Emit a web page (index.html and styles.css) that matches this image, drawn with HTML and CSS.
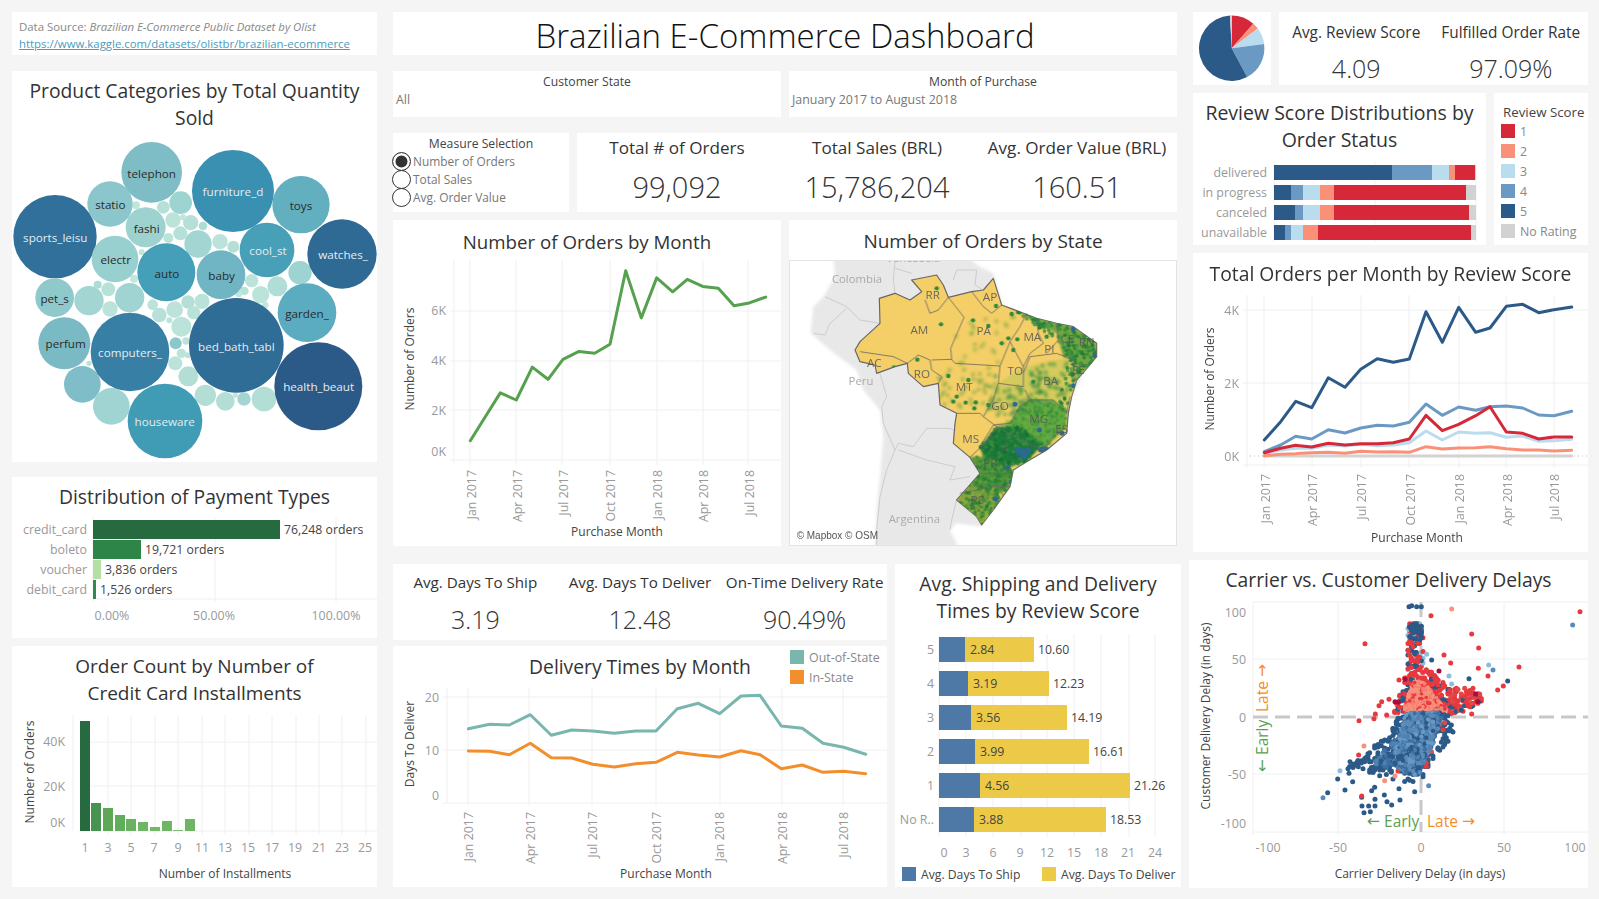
FILE: index.html
```html
<!DOCTYPE html>
<html lang="en">
<head>
<meta charset="utf-8">
<title>Brazilian E-Commerce Dashboard</title>
<link rel="stylesheet" href="styles.css">
</head>
<body>
<div class="dash">

<div class="col-left">
  <section class="panel source">
    <p>Data Source: <em>Brazilian E-Commerce Public Dataset by Olist</em></p>
    <p><a href="#">https://www.kaggle.com/datasets/olistbr/brazilian-ecommerce</a></p>
  </section>

  <section class="panel bubbles">
    <h2 class="ptitle h67">Product Categories by Total Quantity<br>Sold</h2>
    <svg class="chart" width="365" height="324" viewBox="12 138 365 324">
      <g transform="scale(.33333)">
        <g>
          <circle cx="247" cy="1153" r="55" fill="#7fbec8"/><circle cx="334" cy="1219" r="55" fill="#a0d4d2"/><circle cx="267" cy="902" r="44" fill="#a3d5d2"/><circle cx="389" cy="893" r="44" fill="#a0d4d2"/><circle cx="325" cy="868" r="21" fill="#b8e2d8"/><circle cx="330" cy="927" r="23" fill="#bce3da"/><circle cx="293" cy="854" r="12" fill="#aedcd4"/>
          <circle cx="542" cy="608" r="34" fill="#9dd4d2"/><circle cx="490" cy="622" r="19" fill="#b7e1d8"/><circle cx="408" cy="616" r="12" fill="#c0e6dc"/><circle cx="519" cy="660" r="23" fill="#bbe3da"/><circle cx="572" cy="668" r="23" fill="#b6e0d7"/><circle cx="609" cy="678" r="13" fill="#aedcd4"/><circle cx="549" cy="652" r="9" fill="#c0e6dc"/><circle cx="541" cy="700" r="21" fill="#b7e1d8"/><circle cx="505" cy="714" r="15" fill="#bce3da"/><circle cx="594" cy="732" r="41" fill="#a3d5d2"/><circle cx="660" cy="725" r="23" fill="#bce3da"/><circle cx="700" cy="740" r="18" fill="#b3dfd6"/><circle cx="425" cy="757" r="9" fill="#c0e6dc"/><circle cx="402" cy="836" r="12" fill="#c3e7dd"/><circle cx="900" cy="818" r="35" fill="#9dd3d1"/><circle cx="832" cy="859" r="30" fill="#b0ddd5"/><circle cx="755" cy="842" r="20" fill="#bce3da"/><circle cx="733" cy="873" r="13" fill="#b8e2d8"/><circle cx="782" cy="884" r="26" fill="#bce3da"/><circle cx="716" cy="882" r="10" fill="#c3e7dd"/><circle cx="796" cy="915" r="10" fill="#c3e7dd"/>
          <circle cx="458" cy="914" r="16" fill="#bce3da"/><circle cx="524" cy="929" r="25" fill="#bce3da"/><circle cx="478" cy="945" r="22" fill="#b7e1d8"/><circle cx="564" cy="906" r="20" fill="#b3dfd6"/><circle cx="606" cy="904" r="23" fill="#b9e2d9"/><circle cx="581" cy="938" r="20" fill="#b9e2d9"/><circle cx="508" cy="961" r="9" fill="#bce3da"/><circle cx="544" cy="980" r="30" fill="#bce3da"/><circle cx="527" cy="1030" r="18" fill="#8bc7cb"/><circle cx="558" cy="1023" r="11" fill="#bce3da"/><circle cx="544" cy="1060" r="14" fill="#bce3da"/><circle cx="526" cy="1090" r="21" fill="#bce3da"/><circle cx="565" cy="1129" r="30" fill="#b2ded6"/><circle cx="616" cy="1186" r="32" fill="#b2ded6"/><circle cx="676" cy="1204" r="28" fill="#b2ded6"/><circle cx="732" cy="1197" r="20" fill="#a3d5d2"/><circle cx="792" cy="1197" r="37" fill="#b2ded6"/><circle cx="706" cy="1186" r="8" fill="#c3e7dd"/><circle cx="267" cy="1090" r="8" fill="#bce3da"/><circle cx="563" cy="1066" r="9" fill="#bce3da"/>
        </g>
        <g>
          <circle cx="455" cy="517" r="91" fill="#7fbdc6"/><circle cx="699" cy="573" r="123" fill="#3a90b0"/><circle cx="903" cy="614" r="86" fill="#62afc0"/><circle cx="165" cy="710" r="125" fill="#30709a"/><circle cx="330" cy="612" r="68" fill="#8ac6cb"/><circle cx="437" cy="682" r="60" fill="#9dd2d1"/><circle cx="345" cy="777" r="70" fill="#98cfcf"/><circle cx="499" cy="817" r="87" fill="#459fb8"/><circle cx="663" cy="824" r="73" fill="#6fb5c4"/><circle cx="801" cy="750" r="82" fill="#489fb8"/><circle cx="1026" cy="762" r="104" fill="#2f6a94"/><circle cx="921" cy="938" r="88" fill="#5bacc0"/><circle cx="164" cy="893" r="58" fill="#8fc9cc"/><circle cx="193" cy="1030" r="78" fill="#79bac5"/><circle cx="390" cy="1056" r="118" fill="#377fa4"/><circle cx="709" cy="1036" r="142" fill="#2f6c96"/><circle cx="955" cy="1159" r="132" fill="#2c5a88"/><circle cx="495" cy="1263" r="112" fill="#409bb5"/>
        </g>
        <g class="btext">
          <text x="455" y="522">telephon</text><text x="331" y="616">statio</text><text x="440" y="687">fashi</text><text x="347" y="781">electr</text><text x="501" y="823">auto</text><text x="665" y="829">baby</text><text x="903" y="619">toys</text><text x="921" y="943">garden_</text><text x="164" y="898">pet_s</text><text x="197" y="1033">perfum</text>
        </g>
        <g class="btext light">
          <text x="699" y="577">furniture_d</text><text x="166" y="715">sports_leisu</text><text x="804" y="754">cool_st</text><text x="1029" y="766">watches_</text><text x="390" y="1060">computers_</text><text x="709" y="1041">bed_bath_tabl</text><text x="956" y="1161">health_beaut</text><text x="494" y="1267">houseware</text>
        </g>
      </g>
    </svg>
  </section>

  <section class="panel payment">
    <h2 class="ptitle h40">Distribution of Payment Types</h2>
    <svg class="chart" width="365" height="121" viewBox="12 517 365 121">
      <path class="grid" d="M93 517V602M215 517V602M336 517V602M93 599H377"/>
      <rect x="93" y="520" width="187" height="19" fill="#276a3f"/>
      <rect x="93" y="540" width="48" height="19" fill="#2e8548"/>
      <rect x="93" y="560" width="8" height="19" fill="#b5e0a5"/>
      <rect x="93" y="580" width="3" height="19" fill="#2f8a4d"/>
      <g class="tick end"><text x="87" y="530">credit_card</text><text x="87" y="550">boleto</text><text x="87" y="570">voucher</text><text x="87" y="590">debit_card</text></g>
      <g class="val"><text x="284" y="530">76,248 orders</text><text x="145" y="550">19,721 orders</text><text x="105" y="570">3,836 orders</text><text x="100" y="590">1,526 orders</text></g>
      <g class="tick mid"><text x="112" y="616">0.00%</text><text x="214" y="616">50.00%</text><text x="336" y="616">100.00%</text></g>
    </svg>
  </section>

  <section class="panel installments">
    <h2 class="ptitle h68 np t19">Order Count by Number of<br>Credit Card Installments</h2>
    <svg class="chart" width="365" height="173" viewBox="12 714 365 173">
      <path class="grid" d="M73 715V831M108 715V835M131 715V835M155 715V835M178 715V835M202 715V835M225 715V835M249 715V835M272 715V835M296 715V835M319 715V835M342 715V835M366 715V835M80 742H377M80 786H377M80 831H377"/>
      <rect x="80" y="721" width="10" height="110" fill="#276a3f"/><rect x="91" y="803" width="10" height="28" fill="#489350"/><rect x="103" y="808" width="10" height="23" fill="#5ea755"/><rect x="115" y="815" width="10" height="16" fill="#62ac5d"/><rect x="126" y="819" width="10" height="12" fill="#6ab162"/><rect x="138" y="822" width="10" height="9" fill="#6eb564"/><rect x="150" y="827" width="10" height="4" fill="#72b866"/><rect x="162" y="821" width="10" height="10" fill="#6eb564"/><rect x="173" y="830" width="10" height="1" fill="#7dbe6e"/><rect x="185" y="819" width="10" height="12" fill="#6eb564"/>
      <g class="tick end"><text x="65" y="742">40K</text><text x="65" y="787">20K</text><text x="65" y="823">0K</text></g>
      <g class="tick mid"><text x="85" y="848">1</text><text x="108" y="848">3</text><text x="131" y="848">5</text><text x="154" y="848">7</text><text x="178" y="848">9</text><text x="202" y="848">11</text><text x="225" y="848">13</text><text x="248" y="848">15</text><text x="272" y="848">17</text><text x="295" y="848">19</text><text x="319" y="848">21</text><text x="342" y="848">23</text><text x="365" y="848">25</text></g>
      <text class="axt" x="225" y="873">Number of Installments</text>
      <text class="axt" transform="translate(29 772) rotate(-90)">Number of Orders</text>
    </svg>
  </section>
</div>

<div class="main">
  <div class="upper">
    <div class="mid-top">
      <h1 class="panel dash-title">Brazilian E-Commerce Dashboard</h1>
      <div class="filters">
        <div class="panel filter"><div class="flabel">Customer State</div><div class="fvalue">All</div></div>
        <div class="panel filter"><div class="flabel">Month of Purchase</div><div class="fvalue">January 2017 to August 2018</div></div>
      </div>
      <div class="measure-row">
        <div class="panel measure">
          <div class="flabel">Measure Selection</div>
          <div class="radio"><span class="dot on"></span>Number of Orders</div>
          <div class="radio"><span class="dot"></span>Total Sales</div>
          <div class="radio"><span class="dot"></span>Avg. Order Value</div>
        </div>
        <div class="panel kpis k1">
          <div class="kpi"><div class="klabel">Total # of Orders</div><div class="kvalue">99,092</div></div>
          <div class="kpi"><div class="klabel">Total Sales (BRL)</div><div class="kvalue">15,786,204</div></div>
          <div class="kpi"><div class="klabel">Avg. Order Value (BRL)</div><div class="kvalue">160.51</div></div>
        </div>
      </div>
      <div class="charts-row">
        <section class="panel">
          <h2 class="ptitle h40 np pt2 t187">Number of Orders by Month</h2>
          <svg class="chart" width="388" height="286" viewBox="393 260 388 286">
            <path class="grid" d="M454 260V463M470 260V465M516 260V465M562 260V465M610 260V465M657 260V465M703 260V465M748 260V465M450 311H781M450 361H781M450 410H781M450 460H781"/>
            <polyline class="line" stroke="#56a14f" points="470.3,440.7 485.3,416.8 500.3,392.9 516.3,400 532.3,367.1 548,379.3 563,359.3 579,351.4 594.7,353.2 610,344.3 625.7,270.7 641.3,317.9 656.7,277.9 672.7,291.8 687.3,279.3 702.7,286.4 718.3,288.2 734,305.7 749.3,302.9 765.7,297.1"/>
            <g class="tick end"><text x="446" y="311">6K</text><text x="446" y="361">4K</text><text x="446" y="411">2K</text><text x="446" y="452">0K</text></g>
            <g class="tick rot"><text transform="translate(471 470) rotate(-90)">Jan 2017</text><text transform="translate(517 470) rotate(-90)">Apr 2017</text><text transform="translate(563 470) rotate(-90)">Jul 2017</text><text transform="translate(610 470) rotate(-90)">Oct 2017</text><text transform="translate(657 470) rotate(-90)">Jan 2018</text><text transform="translate(703 470) rotate(-90)">Apr 2018</text><text transform="translate(749 470) rotate(-90)">Jul 2018</text></g>
            <text class="axt" x="617" y="531">Purchase Month</text>
            <text class="axt" transform="translate(409 359) rotate(-90)">Number of Orders</text>
          </svg>
        </section>
        <section class="panel">
          <h2 class="ptitle h40 np pt2 t19">Number of Orders by State</h2>
          <svg class="chart" width="388" height="286" viewBox="789 260 388 286">
            <defs>
              <clipPath id="brazil"><polygon points="225,420 240,395 300,340 298,265 345,250 390,270 425,245 395,210 470,195 490,225 505,262 575,245 610,240 640,205 665,285 700,298 770,325 830,340 880,350 950,400 950,440 925,470 890,510 875,560 865,610 860,670 800,720 740,755 700,780 690,830 640,900 605,945 590,920 530,870 600,790 570,742 520,700 525,640 530,610 480,585 475,520 430,530 385,490 382,460 345,470 290,490 285,465 240,455"/></clipPath>
              <filter id="soft"><feGaussianBlur stdDeviation="2.4"/></filter>
              <filter id="softer"><feGaussianBlur stdDeviation="5"/></filter>
            </defs>
            <g transform="translate(780 210) scale(.33333)">
              <polygon class="land" filter="url(#softer)" points="160,140 165,200 130,260 100,290 92,370 150,420 230,480 250,540 300,600 310,680 300,800 290,900 285,1010 535,1010 510,960 530,940 605,950 640,860 760,700 860,600 950,400 700,300 670,290 640,190 600,170 560,140"/>
              <path class="border" d="M135 260L200 290 240 330 300 340M100 370L135 375 150 340 200 295M345 150L340 210 345 250M395 190L345 175M520 210L530 180 590 180 585 225 610 240M300 490L320 560 305 590 310 640 345 720 355 700 400 710 440 655 510 655 520 660M345 720L320 780 300 860 290 960 290 1005M355 720L440 750 525 770 510 810 570 800M530 870L515 930 510 960"/>
              <polygon class="state" points="225,420 240,395 300,340 298,265 345,250 390,270 425,245 395,210 470,195 490,225 505,262 575,245 610,240 640,205 665,285 700,298 770,325 830,340 880,350 950,400 950,440 925,470 890,510 875,560 865,610 860,670 800,720 740,755 700,780 690,830 640,900 605,945 590,920 530,870 600,790 570,742 520,700 525,640 530,610 480,585 475,520 430,530 385,490 382,460 345,470 290,490 285,465 240,455"/>
              <g clip-path="url(#brazil)">
                <g filter="url(#soft)">
                  <polygon fill="#c8c858" opacity=".7" points="730,470 880,440 890,510 860,610 750,570 640,580 610,620 640,530"/>
                  <polygon fill="#68ab3f" points="640,645 690,640 720,590 750,565 820,570 860,600 860,650 820,690 790,720 720,650"/>
                  <polygon fill="#1f7c3a" points="600,710 650,650 720,650 790,700 740,755 690,770 610,740"/>
                  <polygon fill="#4f933a" points="570,742 610,740 690,770 700,790 690,830 660,850 610,860 550,850 600,790"/>
                  <polygon fill="#8ea63c" points="530,870 570,825 640,830 660,860 640,900 605,945 590,920"/>
                  <polygon fill="#71a53f" points="700,300 770,325 880,350 950,400 950,440 890,510 880,450 850,440 830,370 770,340"/>
                </g>
                <g id="mapsoft" filter="url(#soft)"></g>
                <g id="mapdots"></g>
              </g>
              <path class="sline" d="M505 262L552 322 512 415 515 448 525 460 660 468M435 270L450 310 475 300 505 262M575 245L610 290 635 310 665 285M740 310L720 350 690 395 660 468 655 520 640 570 610 620M240 425L340 440 382 460 415 435 450 450 455 480 485 500 475 520M455 450L515 448M530 610L600 610 610 620 650 650 620 695 570 742M690 395L730 470 730 530 655 520M770 325L775 370 790 400 750 430 730 470M830 340L835 390 800 430M730 490L750 440 830 430 880 450 885 510M870 560L860 610 820 570 750 570 735 540M640 645L690 640 720 590 750 570M640 645L600 710M860 650L820 680 790 720 740 700 650 650M600 790L690 790M540 850L640 830 690 830"/>
              <g class="stlabel"><text x="418" y="360">AM</text><text x="458" y="255">RR</text><text x="630" y="260">AP</text><text x="611" y="362">PA</text><text x="757" y="380">MA</text><text x="862" y="387">CE</text><text x="920" y="395">RN</text><text x="808" y="415">PI</text><text x="283" y="458">AC</text><text x="426" y="492">RO</text><text x="553" y="530">MT</text><text x="706" y="482">TO</text><text x="812" y="513">BA</text><text x="895" y="480">SE</text><text x="660" y="587">GO</text><text x="776" y="627">MG</text><text x="845" y="657">ES</text><text x="572" y="687">MS</text><text x="685" y="703">SP</text><text x="631" y="758">PR</text><text x="592" y="868">RS</text></g>
              <g class="cntlabel"><text x="231" y="207">Colombia</text><text x="243" y="513">Peru</text><text x="403" y="925">Argentina</text><text x="400" y="143">Venezuela</text></g>
              <rect x="40" y="960" width="243" height="35" fill="#fff" opacity=".75"/>
              <text class="copy" x="50" y="978">© Mapbox © OSM</text>
            </g>
            <rect class="frame" x="789.5" y="260.5" width="387" height="285"/>
          </svg>
        </section>
      </div>
    </div>

    <div class="right-top">
      <div class="pie-row">
        <div class="panel pie">
          <svg width="78" height="73" viewBox="1193 12 78 73">
            <path fill="#d62839" d="M1231.7 48.3V15.6A32.7 32.7 0 0 1 1253.3 23.8Z"/>
            <path fill="#fb9078" d="M1231.7 48.3L1253.3 23.8A32.7 32.7 0 0 1 1257.8 28.6Z"/>
            <path fill="#b9dcee" d="M1231.7 48.3L1257.8 28.6A32.7 32.7 0 0 1 1264.1 44Z"/>
            <path fill="#6a9ac4" d="M1231.7 48.3L1264.1 44A32.7 32.7 0 0 1 1247.1 77.1Z"/>
            <path fill="#2c5a88" d="M1231.7 48.3L1247.1 77.1A32.7 32.7 0 1 1 1230 15.6Z"/>
            <path fill="#d2d2d2" d="M1231.7 48.3L1230 15.6H1231.7Z"/>
          </svg>
        </div>
        <div class="panel kpis k3">
          <div class="kpi"><div class="klabel">Avg. Review Score</div><div class="kvalue">4.09</div></div>
          <div class="kpi"><div class="klabel">Fulfilled Order Rate</div><div class="kvalue">97.09%</div></div>
        </div>
      </div>
      <div class="review-row">
        <section class="panel">
          <h2 class="ptitle h68 t195">Review Score Distributions by<br>Order Status</h2>
          <svg class="chart" width="293" height="84" viewBox="1193 161 293 84">
            <path class="grid" d="M1375 161V242M1476 161V242M1274 161V242"/>
            <g class="stack">
              <rect x="1274" y="165" width="118" height="15" fill="#2c5a88"/><rect x="1392" y="165" width="40" height="15" fill="#6a9ac4"/><rect x="1432" y="165" width="17" height="15" fill="#b9dcee"/><rect x="1449" y="165" width="6" height="15" fill="#fb9078"/><rect x="1455" y="165" width="20" height="15" fill="#d62839"/><rect x="1475" y="165" width="1" height="15" fill="#d2d2d2"/>
              <rect x="1274" y="185" width="17" height="15" fill="#2c5a88"/><rect x="1291" y="185" width="12" height="15" fill="#6a9ac4"/><rect x="1303" y="185" width="17" height="15" fill="#b9dcee"/><rect x="1320" y="185" width="14" height="15" fill="#fb9078"/><rect x="1334" y="185" width="132" height="15" fill="#d62839"/><rect x="1466" y="185" width="10" height="15" fill="#d2d2d2"/>
              <rect x="1274" y="205" width="21" height="15" fill="#2c5a88"/><rect x="1295" y="205" width="8" height="15" fill="#6a9ac4"/><rect x="1303" y="205" width="17" height="15" fill="#b9dcee"/><rect x="1320" y="205" width="14" height="15" fill="#fb9078"/><rect x="1334" y="205" width="135" height="15" fill="#d62839"/><rect x="1469" y="205" width="7" height="15" fill="#d2d2d2"/>
              <rect x="1274" y="225" width="11" height="15" fill="#2c5a88"/><rect x="1285" y="225" width="6" height="15" fill="#6a9ac4"/><rect x="1291" y="225" width="12" height="15" fill="#b9dcee"/><rect x="1303" y="225" width="15" height="15" fill="#fb9078"/><rect x="1318" y="225" width="153" height="15" fill="#d62839"/><rect x="1471" y="225" width="5" height="15" fill="#d2d2d2"/>
            </g>
            <g class="tick end"><text x="1267" y="173">delivered</text><text x="1267" y="193">in progress</text><text x="1267" y="213">canceled</text><text x="1267" y="233">unavailable</text></g>
          </svg>
        </section>
        <div class="panel legend">
          <div class="ltitle">Review Score</div>
          <div class="litem"><span class="sw c1"></span>1</div>
          <div class="litem"><span class="sw c2"></span>2</div>
          <div class="litem"><span class="sw c3"></span>3</div>
          <div class="litem"><span class="sw c4"></span>4</div>
          <div class="litem"><span class="sw c5"></span>5</div>
          <div class="litem"><span class="sw c6"></span>No Rating</div>
        </div>
      </div>
      <section class="panel total-orders">
        <h2 class="ptitle h38 np pt2">Total Orders per Month by Review Score</h2>
        <svg class="chart" width="395" height="261" viewBox="1193 291 395 261">
          <path class="grid" d="M1247 295V468M1264 295V468M1312 295V468M1361 295V468M1409 295V468M1459 295V468M1506 295V468M1554 295V468M1243 310H1588M1243 383H1588M1243 465H1588"/>
          <path class="dots0" d="M1250 456H1588"/>
          <polyline class="line" stroke="#d2d2d2" points="1264.3,456 1571.7,456"/>
          <polyline class="line" stroke="#b9dcee" points="1264.3,453.3 1280.7,450 1295.7,448.3 1311.7,448.3 1328.3,445 1345,446 1360.7,444.3 1377.3,445.7 1393.3,445 1409.3,442.7 1426,431 1442.3,440 1458.7,432 1475.7,433.3 1490,432.7 1506.3,437.3 1522.7,436 1538.7,441.3 1554,440.7 1571.7,439.3"/>
          <polyline class="line" stroke="#6a9ac4" points="1264.3,451.7 1280.7,445 1295.7,436.3 1311.7,439 1328.3,429.7 1345,433 1360.7,428 1377.3,425.3 1393.3,426 1409.3,422.3 1426,404 1442.3,415.3 1458.7,407 1475.7,410.3 1490,406.7 1506.3,406 1522.7,408 1538.7,415 1554,415.7 1571.7,411.3"/>
          <polyline class="line" stroke="#fb9078" points="1264.3,455.7 1280.7,454.3 1295.7,453.7 1311.7,452.7 1328.3,452.3 1345,453.3 1360.7,451.3 1377.3,452 1393.3,451.7 1409.3,452.3 1426,446.7 1442.3,449 1458.7,448 1475.7,447.7 1490,446.7 1506.3,448.7 1522.7,450 1538.7,450 1554,451 1571.7,450.3"/>
          <polyline class="line" stroke="#d62839" points="1264.3,452.7 1280.7,448.3 1295.7,445.3 1311.7,447 1328.3,443.3 1345,445 1360.7,443.7 1377.3,443.7 1393.3,442.7 1409.3,439 1426,415.3 1442.3,430.7 1458.7,424.3 1475.7,415.7 1490,406.7 1506.3,432 1522.7,433.3 1538.7,439 1554,437 1571.7,437"/>
          <polyline class="line" stroke="#2c5a88" points="1264.3,440 1280.7,421.7 1295.7,401.3 1311.7,407.7 1328.3,377.7 1345,387.3 1360.7,369.3 1377.3,358.7 1393.3,362.3 1409.3,359 1426,311.7 1442.3,342.3 1458.7,307.3 1475.7,332.3 1490,328 1506.3,306.3 1522.7,304.3 1538.7,312.7 1554,309.7 1571.7,307"/>
          <g class="tick end"><text x="1239" y="311">4K</text><text x="1239" y="384">2K</text><text x="1239" y="457">0K</text></g>
          <g class="tick rot"><text transform="translate(1265 474) rotate(-90)">Jan 2017</text><text transform="translate(1312 474) rotate(-90)">Apr 2017</text><text transform="translate(1361 474) rotate(-90)">Jul 2017</text><text transform="translate(1410 474) rotate(-90)">Oct 2017</text><text transform="translate(1459 474) rotate(-90)">Jan 2018</text><text transform="translate(1507 474) rotate(-90)">Apr 2018</text><text transform="translate(1554 474) rotate(-90)">Jul 2018</text></g>
          <text class="axt" x="1417" y="537">Purchase Month</text>
          <text class="axt" transform="translate(1209 379) rotate(-90)">Number of Orders</text>
        </svg>
      </section>
    </div>
  </div>

  <div class="lower">
    <div class="mid-low">
      <div class="delivery-col">
        <div class="panel kpis k2">
          <div class="kpi"><div class="klabel">Avg. Days To Ship</div><div class="kvalue">3.19</div></div>
          <div class="kpi"><div class="klabel">Avg. Days To Deliver</div><div class="kvalue">12.48</div></div>
          <div class="kpi"><div class="klabel">On-Time Delivery Rate</div><div class="kvalue">90.49%</div></div>
        </div>
        <section class="panel delivery">
          <h2 class="ptitle h42">Delivery Times by Month</h2>
          <div class="dlegend">
            <div class="litem"><span class="sw teal"></span>Out-of-State</div>
            <div class="litem"><span class="sw orange"></span>In-State</div>
          </div>
          <svg class="chart" width="494" height="199" viewBox="393 688 494 199">
            <path class="grid" d="M447 688V803M468 688V806M529 688V806M592 688V806M656 688V806M720 688V806M782 688V806M843 688V806M443 697H887M443 750H887M443 803H887"/>
            <polyline class="line" stroke="#79b6ae" points="468.3,728.7 489.7,724.3 509.3,725 530.3,714.7 551.3,735.3 571.7,730 592.7,731 614.3,733.3 635.7,731 656,731 677.3,708.7 698.3,703.3 719.7,713.7 741,696 760,695.3 781.3,726 802.3,728.3 823,743.3 843.7,747.3 865.7,754.3"/>
            <polyline class="line" stroke="#f28e2b" points="468.3,751 489.7,751.3 509.3,754.7 530.3,743.3 551.3,757.7 571.7,758 592.7,764.3 614.3,767 635.7,763.7 656,762.3 677.3,752.3 698.3,755 719.7,757 741,750.7 760,754.7 781.3,768.7 802.3,765 823,772.3 843.7,771.3 865.7,773.7"/>
            <g class="tick end"><text x="439" y="698">20</text><text x="439" y="751">10</text><text x="439" y="796">0</text></g>
            <g class="tick rot"><text transform="translate(468 812) rotate(-90)">Jan 2017</text><text transform="translate(530 812) rotate(-90)">Apr 2017</text><text transform="translate(592 812) rotate(-90)">Jul 2017</text><text transform="translate(656 812) rotate(-90)">Oct 2017</text><text transform="translate(719 812) rotate(-90)">Jan 2018</text><text transform="translate(782 812) rotate(-90)">Apr 2018</text><text transform="translate(843 812) rotate(-90)">Jul 2018</text></g>
            <text class="axt" x="666" y="873">Purchase Month</text>
            <text class="axt" transform="translate(409 744) rotate(-90)">Days To Deliver</text>
          </svg>
        </section>
      </div>
      <section class="panel shipping">
        <h2 class="ptitle h67">Avg. Shipping and Delivery<br>Times by Review Score</h2>
        <svg class="chart" width="286" height="256" viewBox="895 631 286 256">
          <path class="grid" d="M939 634V837M966 634V837M993 634V837M1021 634V837M1047 634V837M1074 634V837M1101 634V837M1129 634V837M1155 634V837"/>
          <g fill="#edc948"><rect x="939" y="637" width="95" height="25"/><rect x="939" y="671" width="110" height="25"/><rect x="939" y="705" width="128" height="25"/><rect x="939" y="739" width="150" height="25"/><rect x="939" y="773" width="191" height="25"/><rect x="939" y="807" width="167" height="25"/></g>
          <g fill="#4e79a7"><rect x="939" y="637" width="26" height="25"/><rect x="939" y="671" width="29" height="25"/><rect x="939" y="705" width="32" height="25"/><rect x="939" y="739" width="36" height="25"/><rect x="939" y="773" width="41" height="25"/><rect x="939" y="807" width="35" height="25"/></g>
          <g class="tick end"><text x="934" y="650">5</text><text x="934" y="684">4</text><text x="934" y="718">3</text><text x="934" y="752">2</text><text x="934" y="786">1</text><text x="934" y="820">No R..</text></g>
          <g class="val"><text x="970" y="650">2.84</text><text x="973" y="684">3.19</text><text x="976" y="718">3.56</text><text x="980" y="752">3.99</text><text x="985" y="786">4.56</text><text x="979" y="820">3.88</text>
          <text x="1038" y="650">10.60</text><text x="1053" y="684">12.23</text><text x="1071" y="718">14.19</text><text x="1093" y="752">16.61</text><text x="1134" y="786">21.26</text><text x="1110" y="820">18.53</text></g>
          <g class="tick mid"><text x="944" y="853">0</text><text x="966" y="853">3</text><text x="993" y="853">6</text><text x="1020" y="853">9</text><text x="1047" y="853">12</text><text x="1074" y="853">15</text><text x="1101" y="853">18</text><text x="1128" y="853">21</text><text x="1155" y="853">24</text></g>
          <rect x="902" y="867" width="14" height="14" fill="#4e79a7"/><rect x="1042" y="867" width="14" height="14" fill="#edc948"/>
          <g class="legtext"><text x="921" y="874">Avg. Days To Ship</text><text x="1061" y="874">Avg. Days To Deliver</text></g>
        </svg>
      </section>
    </div>
    <section class="panel carrier">
      <h2 class="ptitle h40">Carrier vs. Customer Delivery Delays</h2>
      <svg class="chart" width="399" height="288" viewBox="1189 600 399 288">
        <path class="grid" d="M1253 602V835M1338 602V835M1504 602V835M1253 602H1588M1253 659H1588M1253 774H1588M1253 832H1588"/>
        <path class="dash-line" d="M1253 717H1588M1421 602V832"/>
        <g id="scatter" transform="translate(1185 560) scale(.33333)"></g>
        <g class="tick end"><text x="1246" y="613">100</text><text x="1246" y="660">50</text><text x="1246" y="718">0</text><text x="1246" y="775">-50</text><text x="1246" y="824">-100</text></g>
        <g class="tick mid"><text x="1268" y="848">-100</text><text x="1338" y="848">-50</text><text x="1421" y="848">0</text><text x="1504" y="848">50</text><text x="1575" y="848">100</text></g>
        <text class="axt" x="1420" y="873">Carrier Delivery Delay (in days)</text>
        <text class="axt" transform="translate(1205 716) rotate(-90)">Customer Delivery Delay (in days)</text>
        <text class="note late" x="1427" y="821">Late <tspan class="arrow">→</tspan></text>
        <text class="note early" x="1367" y="821"><tspan class="arrow">←</tspan> Early</text>
        <text class="note late" transform="translate(1262 712) rotate(-90)">Late <tspan class="arrow">→</tspan></text>
        <text class="note early" transform="translate(1262 772) rotate(-90)"><tspan class="arrow">←</tspan> Early</text>
      </svg>
    </section>
  </div>
</div>

</div>
<script src="script.js"></script>
</body>
</html>
```

FILE: styles.css
```css
* { box-sizing: border-box; }
html, body { margin: 0; padding: 0; }
body {
  width: 1599px;
  height: 899px;
  overflow: hidden;
  background: #f5f5f5;
  font-family: "Open Sans", "Noto Sans", sans-serif;
  color: #333;
}
.dash { display: flex; gap: 16px; padding: 12px 0 0 12px; }
.panel { background: #fff; position: relative; }
.chart { display: block; overflow: hidden; }

/* left column */
.col-left { width: 365px; display: flex; flex-direction: column; }
.source { height: 43px; padding: 6px 7px; font-size: 11.4px; line-height: 17px; color: #888; }
.source p { margin: 0; white-space: nowrap; }
.source a { color: #4b9bbd; }
.bubbles { height: 391px; margin-top: 16px; }
.payment { height: 161px; margin-top: 15px; }
.installments { height: 241px; margin-top: 8px; }

/* panel titles */
.ptitle {
  margin: 0;
  padding-bottom: 2px;
  display: flex;
  align-items: center;
  justify-content: center;
  text-align: center;
  font-size: 19.3px;
  font-weight: 400;
  line-height: 27px;
  color: #333;
}
.np { padding-bottom: 0; }
.pt2 { padding-top: 2px; }
.t187 { font-size: 18.7px; }
.t19 { font-size: 19px; }
.t195 { font-size: 19.5px; }
.h38 { height: 38px; }
.h40 { height: 40px; }
.h42 { height: 42px; }
.h67 { height: 67px; }
.h68 { height: 68px; }

/* layout */
.main { width: 1195px; display: flex; flex-direction: column; gap: 8px; }
.upper { display: grid; grid-template-columns: 784px 395px; gap: 16px; height: 540px; }
.mid-top { display: flex; flex-direction: column; }
.dash-title {
  margin: 0;
  height: 43px;
  font-size: 33px;
  font-weight: 300;
  line-height: 47px;
  text-align: center;
  color: #111;
}
.filters { display: grid; grid-template-columns: 388px 388px; gap: 8px; margin-top: 16px; }
.filter { height: 46px; padding-top: 2px; }
.flabel { font-size: 12.2px; line-height: 17px; text-align: center; color: #444; font-weight: 500; }
.fvalue { font-size: 12.4px; line-height: 18px; padding: 1px 3px; color: #777; }
.measure-row { display: flex; gap: 8px; margin-top: 16px; }
.measure { width: 176px; height: 79px; padding-top: 2px; }
.radio { display: flex; align-items: center; gap: 2px; height: 18px; font-size: 11.9px; color: #777; }
.dot { width: 19px; height: 19px; margin-left: -1px; border: 1px solid #333; border-radius: 50%; flex: none; background: #fff; }
.dot.on { box-shadow: inset 0 0 0 2.5px #fff, inset 0 0 0 9px #333; }
.charts-row { display: grid; grid-template-columns: 388px 388px; gap: 8px; margin-top: 8px; height: 326px; }

/* KPI blocks */
.kpis { display: grid; grid-auto-flow: column; grid-auto-columns: 1fr; text-align: center; }
.klabel { line-height: 24px; white-space: nowrap; color: #333; }
.kvalue { line-height: 36px; font-weight: 300; color: #333; }
.k1 { width: 600px; height: 79px; padding-top: 3px; }
.k1 .klabel { font-size: 17.1px; }
.k1 .kvalue { font-size: 29px; margin-top: 9px; }
.k2 { height: 76px; padding-top: 6px; }
.k2 .klabel { font-size: 15.2px; }
.k2 .kvalue { font-size: 25px; margin-top: 7px; }
.k3 { width: 309px; height: 73px; padding-top: 9px; }
.k3 .klabel { font-size: 15.4px; }
.k3 .kvalue { font-size: 25px; margin-top: 5px; }

/* right column */
.right-top { display: flex; flex-direction: column; gap: 8px; }
.pie-row { display: flex; gap: 8px; height: 73px; }
.pie { width: 78px; height: 73px; }
.pie svg { display: block; }
.review-row { display: grid; grid-template-columns: 293px 94px; gap: 8px; height: 152px; }
.legend { padding: 11px 0 0 7px; }
.ltitle { font-size: 13.3px; line-height: 17px; color: #444; margin-left: 2px; white-space: nowrap; }
.litem { display: flex; align-items: center; gap: 5px; height: 20px; font-size: 12.4px; color: #888; white-space: nowrap; }
.sw { width: 14px; height: 14px; flex: none; }
.c1 { background: #d62839; }
.c2 { background: #fb9078; }
.c3 { background: #b9dcee; }
.c4 { background: #6a9ac4; }
.c5 { background: #2c5a88; }
.c6 { background: #d2d2d2; }
.teal { background: #79b6ae; }
.orange { background: #f28e2b; }
.total-orders { height: 299px; }

/* lower band */
.lower { display: flex; gap: 8px; height: 328px; }
.mid-low { width: 788px; display: flex; gap: 8px; padding-top: 4px; }
.delivery-col { width: 494px; display: flex; flex-direction: column; gap: 6px; }
.delivery { height: 241px; }
.dlegend { position: absolute; top: 1px; left: 397px; }
.shipping { width: 286px; height: 323px; }
.carrier { width: 399px; height: 328px; }

/* svg chart parts */
.grid { stroke: #f0f0f0; stroke-width: 1; fill: none; }
.line { fill: none; stroke-width: 3; stroke-linejoin: round; stroke-linecap: round; }
.dots0 { stroke: #bbb; stroke-width: 1; stroke-dasharray: 1 3; fill: none; }
.dash-line { stroke: #c8c8c8; stroke-width: 3; stroke-dasharray: 15 7; fill: none; }
.chart text { font-family: "Open Sans", "Noto Sans", sans-serif; dominant-baseline: central; }
.tick text { font-size: 12.4px; fill: #999; }
.end, .mid, .val { transform: translateY(-1px); }
.end text { text-anchor: end; }
.mid text { text-anchor: middle; }
.rot text { text-anchor: end; }
.val text { font-size: 12.3px; fill: #444; }
.legtext text { font-size: 12.2px; fill: #444; }
.axt { font-size: 12px; fill: #444; text-anchor: middle; }
.note { font-size: 15.5px; }
.chart .arrow { font-family: "DejaVu Sans", sans-serif; }
.late { fill: #f28e2b; }
.early { fill: #59a14f; }
.btext { transform: translateY(-2.5px); }
.btext text { font-size: 35px; text-anchor: middle; fill: #2b2b2b; }
.btext.light text { fill: #e4edf2; }

/* map */
.land { fill: #e8e8e8; }
.border { fill: none; stroke: #c6c6c6; stroke-width: 2.5; }
.state { fill: #f4ce66; stroke: #666; stroke-width: 3.5; stroke-linejoin: round; }
.sline { fill: none; stroke: #666; stroke-width: 3; opacity: .8; }
.stlabel text { font-size: 35px; fill: #555; text-anchor: middle; opacity: .85; }
.cntlabel text { font-size: 34px; fill: #aaa; text-anchor: middle; }
.chart .copy { font-family: "Liberation Sans", sans-serif; font-size: 30px; fill: #555; }
.frame { fill: none; stroke: #e3e3e3; stroke-width: 1; }
```

FILE: script.js
```js
// Seeded scatter marks for the map and the delay plot: too many points to list by hand.
(function () {
  var NS = 'http://www.w3.org/2000/svg';
  var seed = 12345;
  function rnd() {
    seed = (seed * 1664525 + 1013904223) >>> 0;
    return seed / 4294967296;
  }
  function inside(p, poly) {
    var c = false;
    for (var i = 0, j = poly.length - 1; i < poly.length; j = i++) {
      if ((poly[i][1] > p[1]) !== (poly[j][1] > p[1]) &&
          p[0] < (poly[j][0] - poly[i][0]) * (p[1] - poly[i][1]) / (poly[j][1] - poly[i][1]) + poly[i][0]) c = !c;
    }
    return c;
  }
  function sample(poly) {
    var xs = poly.map(function (q) { return q[0]; }), ys = poly.map(function (q) { return q[1]; });
    var x0 = Math.min.apply(null, xs), x1 = Math.max.apply(null, xs), y0 = Math.min.apply(null, ys), y1 = Math.max.apply(null, ys);
    for (var t = 0; t < 200; t++) {
      var p = [x0 + rnd() * (x1 - x0), y0 + rnd() * (y1 - y0)];
      if (inside(p, poly)) return p;
    }
    return poly[0];
  }
  function dot(g, x, y, r, fill, op) {
    var c = document.createElementNS(NS, 'circle');
    c.setAttribute('cx', x.toFixed(1));
    c.setAttribute('cy', y.toFixed(1));
    c.setAttribute('r', r);
    c.setAttribute('fill', fill);
    if (op) c.setAttribute('opacity', op);
    g.appendChild(c);
  }
  function scatter(g, poly, n, r, colors, op, lattice) {
    for (var i = 0; i < n; i++) {
      var p = sample(poly);
      if (lattice) {
        p = [709 + 5 * Math.round((p[0] - 709) / 5), 471 + 3.45 * Math.round((p[1] - 471) / 3.45)];
      }
      dot(g, p[0], p[1], r, colors[Math.floor(rnd() * colors.length)], op);
    }
  }
  function list(g, pts, r, fill) {
    pts.forEach(function (p) { dot(g, p[0], p[1], r, fill); });
  }

  /* delay plot: day counts are whole numbers, so points sit on a lattice */
  var s = document.getElementById('scatter');
  var DARK = '#2c5a88', BLUE = '#4f81b2', RED = '#e8393f', SALMON = '#f58170', CRIM = '#a50f3a', LT = '#8fbcdb';
  scatter(s, [[625,458],[672,320],[718,320],[770,360],[800,395],[810,460]], 300, 7.5, [RED, RED, RED, DARK], null, true);
  scatter(s, [[780,385],[885,385],[895,422],[830,460],[800,450]], 80, 7.5, [RED, RED, '#e04a45', DARK], null, true);
  scatter(s, [[670,190],[714,190],[716,330],[668,330]], 110, 7.5, [RED, RED, DARK, RED, LT], null, true);
  scatter(s, [[668,185],[712,185],[712,240],[668,240]], 25, 7.5, [DARK], null, true);
  scatter(s, [[655,455],[685,365],[715,365],[760,420],[790,455]], 560, 5.5, [SALMON, '#f7907c', '#f7907c', RED], null, true);
  scatter(s, [[480,625],[540,585],[590,540],[650,460],[795,460],[805,520],[750,600],[705,670],[640,665],[560,640]], 300, 7.5, [DARK], null, true);
  scatter(s, [[620,600],[610,560],[580,600],[650,490],[790,475],[750,580],[705,650],[650,650]], 34, 7.5, [RED, '#d94a4a'], null, true);
  scatter(s, [[560,610],[640,530],[660,620],[600,625]], 120, 7, [DARK, '#3f6fa2', BLUE], null, true);
  scatter(s, [[630,570],[665,458],[775,458],[738,565],[700,645],[655,640]], 1200, 6.5, [BLUE, '#5a8bb8', '#3f6fa2', '#6a9ac4', DARK], null, true);
  list(s, [[672,140],[680,137],[695,140],[709,140],[852,356],[740,300],[968,363],[428,698],[458,657],[480,690],[569,682],[560,692],[530,712],[570,718],[531,738],[551,738],[570,738],[537,758],[556,755],[645,720],[620,735],[606,725],[598,705],[642,686],[689,695],[495,605],[492,640],[503,665],[520,620]], 7.5, DARK);
  list(s, [[540,251],[738,167],[860,222],[881,264],[777,285],[797,309],[1002,321],[1185,155],[909,348],[880,325],[522,482],[582,437],[590,425],[612,418],[642,360],[571,462],[567,476],[605,465],[938,390],[955,378],[860,462],[530,708],[521,585]], 7.5, RED);
  list(s, [[800,147],[537,558],[599,662],[630,648]], 7.5, '#fb9078');
  list(s, [[660,358],[630,425],[762,333],[872,402],[878,425],[640,427]], 7.5, CRIM);
  list(s, [[1163,195],[924,330],[731,677],[414,713]], 7.5, '#5a8bb8');
  list(s, [[911,315],[792,348],[465,632],[800,372],[725,283]], 7.5, LT);

  /* map marks */
  var m = document.getElementById('mapdots');
  var sf = document.getElementById('mapsoft');
  var G1 = '#2f8a3f', G2 = '#1f7a38', G3 = '#4a9a3f';
  scatter(m, [[640,645],[690,640],[720,590],[750,565],[820,570],[860,600],[860,650],[820,690],[790,720],[720,650]], 220, 5, [G1, G3, '#5aa540'], '.6');
  scatter(m, [[600,710],[650,650],[720,650],[790,700],[740,755],[690,770],[610,740]], 200, 5, [G2, '#176e33', '#3f9140'], '.7');
  scatter(m, [[570,742],[610,740],[690,770],[700,790],[690,830],[640,900],[605,945],[590,920],[530,870],[600,790]], 300, 5, [G1, G2, '#6e9c3a'], '.7');
  scatter(m, [[700,298],[770,325],[880,350],[950,400],[950,440],[890,510],[860,610],[835,590],[860,450],[835,390],[770,350]], 170, 5.5, [G1, G3, G2], '.8');
  scatter(sf, [[470,450],[660,468],[655,520],[610,620],[530,610],[480,585]], 45, 7, [G3], '.35');
  scatter(sf, [[520,320],[720,320],[660,460],[520,450]], 22, 7, [G3], '.3');
  scatter(sf, [[640,530],[735,530],[750,570],[690,640],[610,620]], 45, 7, [G3, G1], '.45');
  scatter(sf, [[735,480],[860,450],[870,560],[750,565]], 50, 7, [G1], '.45');
  list(m, [[470,235],[483,343],[579,331],[625,348],[412,449],[342,472],[565,510],[557,578],[583,595],[587,577],[712,388],[700,420],[800,380],[773,336],[695,312],[648,288],[520,575],[530,560],[505,498],[665,400],[685,385],[625,585],[760,515]], 6.5, G1);
  /* large cities */
  var BL = '#2a6a8f';
  list(m, [[778,660],[705,583],[846,670],[880,527],[945,437],[880,357],[646,866],[682,773],[694,816]], 7.5, BL);
  [[716,722,12],[730,730,14],[743,722,10],[731,741,9],[782,719,8],[792,720,11],[803,719,7]].forEach(function (c) { dot(m, c[0], c[1], c[2], BL); });
})();
```
